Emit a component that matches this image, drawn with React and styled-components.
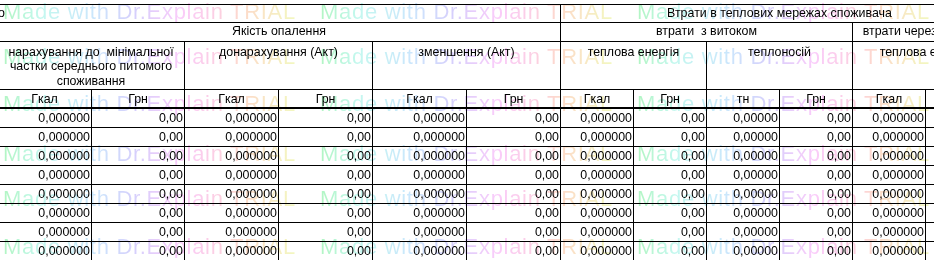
import styled, { createGlobalStyle } from "styled-components";

const GlobalStyle = createGlobalStyle`
  html, body {
    margin: 0;
    padding: 0;
    background: #fff;
  }
  body {
    overflow: hidden;
  }
`;

const COLS = [94, 93, 94, 94, 94, 94, 73, 73, 73, 73, 73, 73];

const UNITS = ["Гкал", "Грн", "Гкал", "Грн", "Гкал", "Грн", "Гкал", "Грн", "тн", "Грн", "Гкал", "Грн"];
const VALUES = [
  "0,000000", "0,00", "0,000000", "0,00", "0,000000", "0,00",
  "0,000000", "0,00", "0,00000", "0,00", "0,000000", "0,00",
];
const ROWS = 8;

// cap tops of the trial stamp rows, read off the picture
const MARK_ROWS = [1, 46, 93, 143, 188, 236];

const Page = styled.div`
  position: relative;
  width: 934px;
  height: 260px;
  overflow: hidden;
  background: #fff;
  color: #000;
  font-family: "Liberation Sans", Arial, sans-serif;
  font-size: 12.4px;
`;

const Sheet = styled.div`
  display: grid;
  grid-template-columns: ${COLS.map((w) => `${w}px`).join(" ")};
  grid-template-rows: 18px 19px 48px 19px;
  grid-auto-rows: 19px;
  width: max-content;
  margin: 4px 0 0 -2px;
  border-top: 1px solid #000;
`;

const Cell = styled.div`
  grid-column: span ${(p) => p.$span || 1};
  box-sizing: border-box;
  border-right: 1px solid #000;
  border-bottom: 1px solid #000;
  white-space: nowrap;
  overflow: hidden;
`;

const TitleCell = styled(Cell)`
  line-height: 17px;
  text-align: ${(p) => (p.$left ? "left" : "center")};
`;

const GroupCell = styled(Cell)`
  padding-top: 3px;
  line-height: 14.4px;
  text-align: center;
  white-space: pre;
`;

const UnitCell = styled(Cell)`
  border-bottom-width: 2px;
  padding-top: 1px;
  line-height: 16px;
  text-align: center;
`;

const ValueCell = styled(Cell)`
  padding-right: 1px;
  line-height: 18px;
  text-align: right;
`;

const Watermark = styled.div`
  position: absolute;
  inset: 0;
  pointer-events: none;
  mix-blend-mode: multiply;
`;

const MarkRow = styled.div`
  position: absolute;
  left: 3px;
  top: ${(p) => p.$top}px;
  display: flex;
  white-space: nowrap;
`;

const Mark = styled.span`
  flex: 0 0 317px;
  font-family: "Liberation Sans", Arial, sans-serif;
  font-size: 22px;
  line-height: 22px;
  letter-spacing: 0.7px;
  color: transparent;
  background: linear-gradient(
    90deg,
    hsl(135, 78%, 83%) 0%,
    hsl(170, 78%, 87%) 12%,
    hsl(205, 88%, 89%) 28%,
    hsl(250, 88%, 90%) 42%,
    hsl(300, 82%, 89%) 56%,
    hsl(335, 88%, 90%) 68%,
    hsl(20, 92%, 89%) 76%,
    hsl(65, 78%, 86%) 92%
  );
  -webkit-background-clip: text;
  background-clip: text;
`;

const App = () => {
  return (
    <Page>
      <GlobalStyle />
      <Sheet>
        <TitleCell $span={6} $left>
          о
        </TitleCell>
        <TitleCell $span={6}>Втрати в теплових мережах споживача</TitleCell>

        <TitleCell $span={6}>Якість опалення</TitleCell>
        <TitleCell $span={4}>{"втрати\u00a0 з витоком"}</TitleCell>
        <TitleCell $span={2}>втрати через ізоляцію</TitleCell>

        <GroupCell $span={2}>
          {"нарахування до  мінімальної\nчастки середнього питомого\nспоживання"}
        </GroupCell>
        <GroupCell $span={2}>донарахування (Акт)</GroupCell>
        <GroupCell $span={2}>зменшення (Акт)</GroupCell>
        <GroupCell $span={2}>теплова енергія</GroupCell>
        <GroupCell $span={2}>теплоносій</GroupCell>
        <GroupCell $span={2}>теплова енергія</GroupCell>

        {UNITS.map((u, i) => (
          <UnitCell key={`u${i}`}>{u}</UnitCell>
        ))}

        {Array.from({ length: ROWS }).map((_, r) =>
          VALUES.map((v, i) => <ValueCell key={`v${r}-${i}`}>{v}</ValueCell>)
        )}
      </Sheet>

      <Watermark>
        {MARK_ROWS.map((top) => (
          <MarkRow key={top} $top={top}>
            <Mark>Made with Dr.Explain TRIAL</Mark>
            <Mark>Made with Dr.Explain TRIAL</Mark>
            <Mark>Made with Dr.Explain TRIAL</Mark>
          </MarkRow>
        ))}
      </Watermark>
    </Page>
  );
};

export default App;
